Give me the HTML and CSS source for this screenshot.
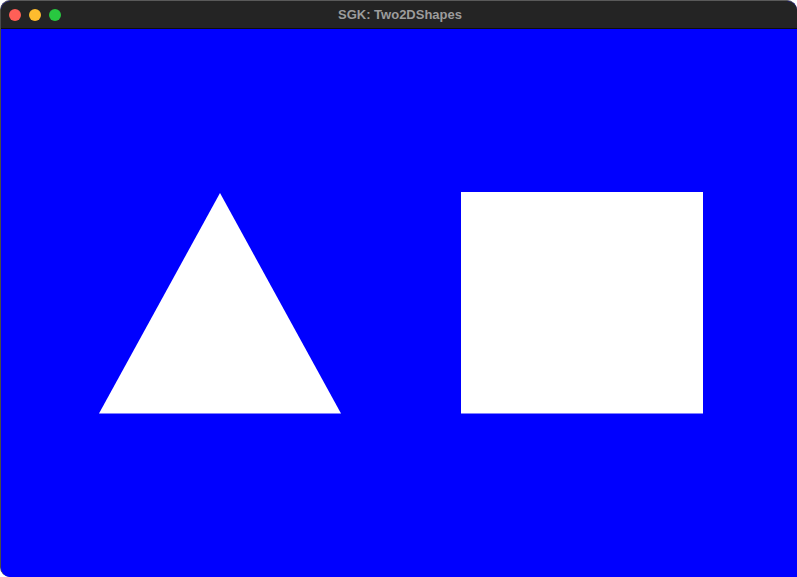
FILE: index.html
```html
<!DOCTYPE html>
<html>
<head>
<meta charset="utf-8">
<title>SGK: Two2DShapes</title>
<link rel="stylesheet" href="styles.css">
</head>
<body>
<div class="window">
  <div class="titlebar">
    <div class="lights">
      <span class="light red"></span>
      <span class="light yellow"></span>
      <span class="light green"></span>
    </div>
    <div class="title">SGK: Two2DShapes</div>
  </div>
  <div class="canvas">
    <svg class="scene" width="796" height="548" viewBox="0 0 796 548">
      <polygon points="219,164 98,384.5 340,384.5" fill="#fff"/>
      <rect x="460" y="163" width="242" height="221.5" fill="#fff"/>
    </svg>
  </div>
</div>
</body>
</html>
```
FILE: styles.css
```css
html, body {
  margin: 0;
  padding: 0;
  background: #fff;
  width: 797px;
  height: 577px;
  overflow: hidden;
}
.window {
  width: 797px;
  height: 577px;
  box-sizing: border-box;
  display: flex;
  flex-direction: column;
  border-radius: 10px 10px 0 10px;
  overflow: hidden;
  border-left: 1px solid #4a4a4a;
  border-top: 1px solid #5a5a5a;
  background: #0000ff;
}
.titlebar {
  height: 27px;
  flex: none;
  position: relative;
  background: #242424;
  border-bottom: 1px solid #0e0e0e;
  display: flex;
  align-items: center;
}
.lights {
  display: flex;
  gap: 8px;
  padding-left: 8px;
}
.light {
  width: 12px;
  height: 12px;
  border-radius: 50%;
  display: block;
}
.red { background: #ff5f57; }
.yellow { background: #febc2e; }
.green { background: #28c840; }
.title {
  position: absolute;
  left: 0;
  right: 0;
  top: 0;
  bottom: 0;
  display: flex;
  align-items: center;
  justify-content: center;
  font-family: "Liberation Sans", Arial, sans-serif;
  font-weight: bold;
  font-size: 13px;
  color: #9c9c9c;
  padding-left: 2px;
}
.canvas {
  flex: 1;
  background: #0000ff;
}
.scene {
  display: block;
}
```
